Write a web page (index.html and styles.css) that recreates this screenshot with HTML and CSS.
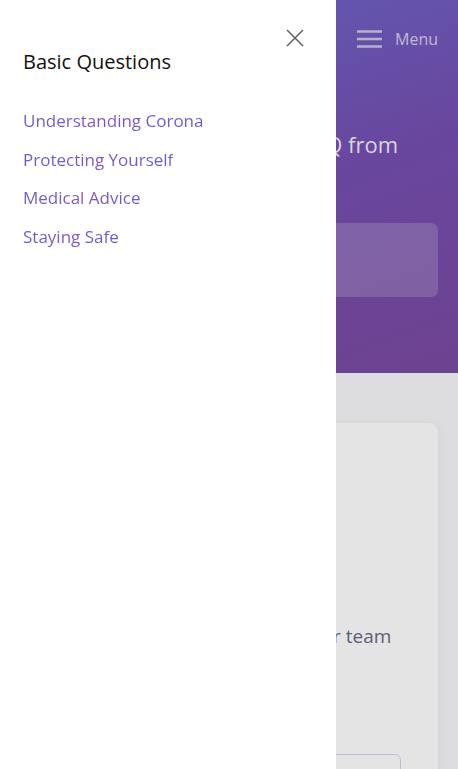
FILE: index.html
```html
<!DOCTYPE html>
<html lang="en">
<head>
<meta charset="utf-8">
<title>Corona FAQ</title>
<link rel="stylesheet" href="styles.css">
</head>
<body>
<div class="page">
  <header class="hero">
    <nav class="topbar">
      <button class="menu-btn" type="button">
        <svg class="burger" width="25" height="18" viewBox="0 0 25 18"><path d="M0 1.5H25M0 9H25M0 16.5H25" stroke="currentColor" stroke-width="2.6"/></svg>
        <span>Menu</span>
      </button>
    </nav>
    <h1 class="hero-title">FAQ from</h1>
    <div class="search"></div>
  </header>
  <main class="content">
    <section class="card">
      <p class="card-text">our team</p>
      <div class="card-box"></div>
    </section>
  </main>
</div>
<div class="overlay"></div>
<aside class="drawer">
  <button class="close" type="button" aria-label="Close">
    <svg width="18" height="18" viewBox="0 0 18 18"><path d="M1 1L17 17M17 1L1 17" stroke="#5f5f5f" stroke-width="1.5"/></svg>
  </button>
  <h2 class="drawer-title">Basic Questions</h2>
  <ul class="drawer-links">
    <li><a href="#">Understanding Corona</a></li>
    <li><a href="#">Protecting Yourself</a></li>
    <li><a href="#">Medical Advice</a></li>
    <li><a href="#">Staying Safe</a></li>
  </ul>
</aside>
</body>
</html>
```
FILE: styles.css
```css
* { box-sizing: border-box; }
html, body { margin: 0; padding: 0; }
body {
  font-family: "Open Sans", "Lato", sans-serif;
  background: #f8f7fa;
  height: 769px;
  overflow: hidden;
}
.page { width: 100%; }
.hero {
  height: 373px;
  background: linear-gradient(160deg, #6d6bcf 0%, #764fb1 55%, #7a4ba1 100%);
  padding: 0 20px;
  display: flex;
  flex-direction: column;
}
.topbar {
  display: flex;
  justify-content: flex-end;
  padding-top: 28px;
}
.menu-btn {
  display: flex;
  align-items: center;
  gap: 13px;
  background: none;
  border: 0;
  padding: 0;
  color: rgba(255,255,255,0.72);
  font-family: inherit;
  font-size: 16px;
}
.burger { color: rgba(255,255,255,0.65); }
.hero-title {
  margin: 76px 0 0 0;
  padding-left: 280px;
  white-space: nowrap;
  font-weight: 400;
  font-size: 22px;
  line-height: 36px;
  color: rgba(255,255,255,0.92);
}
.search {
  margin-top: 61px;
  height: 74px;
  border-radius: 7px;
  background: rgba(255,255,255,0.18);
}
.content { padding: 50px 20px 0; }
.card {
  background: #fff;
  border-radius: 9px;
  box-shadow: 0 2px 12px rgba(60,50,120,0.08);
  padding: 198px 26px 0;
  height: 400px;
}
.card-text {
  margin: 0;
  font-size: 19px;
  line-height: 30px;
  color: #6a6987;
  padding-left: 264px;
  white-space: nowrap;
}
.card-box {
  margin-top: 103px;
  width: 355px;
  height: 48px;
  border: 1px solid #d9d3f3;
  border-radius: 6px;
}
.overlay {
  position: fixed;
  inset: 0;
  background: rgba(0,0,0,0.106);
}
.drawer {
  position: fixed;
  top: 0;
  left: 0;
  bottom: 0;
  width: 336px;
  background: #fff;
  padding: 49px 23px 0;
}
.close {
  position: absolute;
  top: 29px;
  right: 32px;
  background: none;
  border: 0;
  padding: 0;
  line-height: 0;
}
.drawer-title {
  margin: 0;
  font-size: 20px;
  line-height: 26px;
  font-weight: 400;
  color: #111;
}
.drawer-links {
  list-style: none;
  margin: 26px 0 0;
  padding: 0;
}
.drawer-links li { height: 38.7px; display: flex; align-items: center; }
.drawer-links a {
  font-size: 17px;
  text-decoration: none;
  background: linear-gradient(90deg, #665ccf, #8352c8 50%, #665ccf);
  -webkit-background-clip: text;
  background-clip: text;
  color: transparent;
}
```
